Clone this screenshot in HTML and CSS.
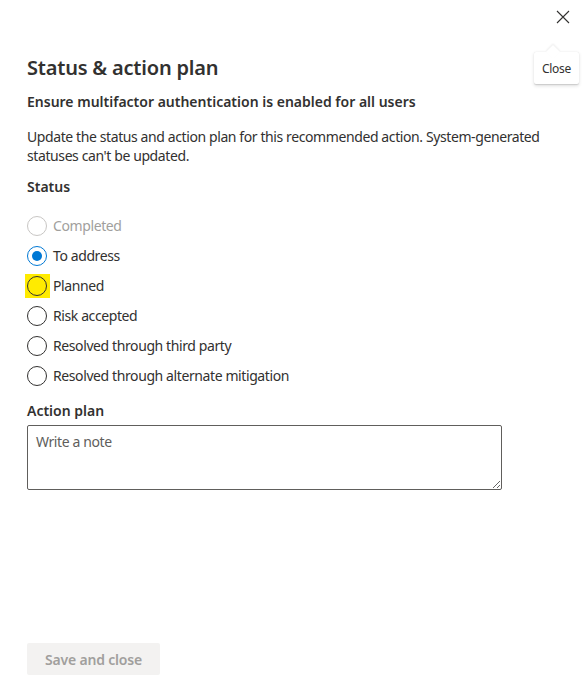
FILE: index.html
```html
<!DOCTYPE html>
<html>
<head>
<meta charset="utf-8">
<link rel="stylesheet" href="styles.css">
</head>
<body>
<div class="panel">
  <div class="topbar">
    <button class="close" aria-label="Close">
      <svg width="14" height="14" viewBox="0 0 14 14"><path d="M1 1L13 13M13 1L1 13" stroke="#323130" stroke-width="1.1" fill="none"/></svg>
    </button>
    <div class="tooltip">Close</div>
  </div>
  <h1 class="title">Status &amp; action plan</h1>
  <div class="subtitle">Ensure multifactor authentication is enabled for all users</div>
  <p class="desc">Update the status and action plan for this recommended action. System-generated statuses can't be updated.</p>
  <div class="label">Status</div>
  <div class="radios">
    <div class="radio disabled"><span class="circle"></span><span class="rtext">Completed</span></div>
    <div class="radio checked"><span class="circle"></span><span class="rtext">To address</span></div>
    <div class="radio highlight"><span class="hl"><span class="circle"></span></span><span class="rtext">Planned</span></div>
    <div class="radio"><span class="circle"></span><span class="rtext">Risk accepted</span></div>
    <div class="radio"><span class="circle"></span><span class="rtext">Resolved through third party</span></div>
    <div class="radio"><span class="circle"></span><span class="rtext">Resolved through alternate mitigation</span></div>
  </div>
  <div class="label label-plan">Action plan</div>
  <textarea class="note" placeholder="Write a note"></textarea>
  <div class="spacer"></div>
  <button class="save">Save and close</button>
</div>
</body>
</html>
```
FILE: styles.css
```css
html, body {
  margin: 0;
  padding: 0;
  background: #fff;
}
body {
  font-family: "Segoe UI", "Noto Sans", "Open Sans", sans-serif;
  color: #323130;
  font-size: 14px;
  width: 584px;
  height: 689px;
  overflow: hidden;
}
.panel {
  display: flex;
  flex-direction: column;
  height: 689px;
  padding: 0 0 0 27px;
  box-sizing: border-box;
}
.topbar {
  position: relative;
  height: 54px;
}
.close {
  position: absolute;
  right: 13px;
  top: 9px;
  width: 16px;
  height: 16px;
  padding: 0;
  border: none;
  background: none;
  display: flex;
  align-items: center;
  justify-content: center;
}
.tooltip {
  position: absolute;
  right: 5px;
  top: 52px;
  width: 45px;
  height: 32px;
  background: #fff;
  box-shadow: 0 1.6px 3.6px rgba(0,0,0,0.13), 0 0.3px 0.9px rgba(0,0,0,0.11);
  font-size: 12px;
  line-height: 33px;
  text-align: center;
  border-radius: 2px;
  letter-spacing: -0.3px;
  z-index: 2;
}
.tooltip::before {
  content: "";
  position: absolute;
  left: 14px;
  top: -5px;
  width: 10px;
  height: 10px;
  background: #fff;
  transform: rotate(45deg);
  box-shadow: -1px -1px 2px rgba(0,0,0,0.07);
}
.title {
  margin: 0;
  font-size: 20px;
  font-weight: 600;
  line-height: 28px;
  height: 28px;
  letter-spacing: -0.2px;
}
.subtitle {
  margin-top: 10px;
  font-weight: 600;
  line-height: 20px;
}
.desc {
  margin: 15px 0 0 0;
  line-height: 19px;
  width: 540px;
  letter-spacing: -0.4px;
}
.label {
  margin-top: 12px;
  font-weight: 600;
  line-height: 20px;
}
.radios {
  margin-top: 19px;
  display: flex;
  flex-direction: column;
  gap: 10px;
}
.radio {
  display: flex;
  align-items: center;
  height: 20px;
  gap: 6px;
}
.circle {
  width: 20px;
  height: 20px;
  border: 1px solid #323130;
  border-radius: 50%;
  box-sizing: border-box;
  position: relative;
  flex: none;
}
.radio.disabled .circle {
  border-color: #c8c6c4;
}
.radio.disabled .rtext {
  color: #a19f9d;
}
.radio.checked .circle {
  border-color: #0078d4;
}
.radio.checked .circle::after {
  content: "";
  position: absolute;
  left: 4px;
  top: 4px;
  width: 10px;
  height: 10px;
  border-radius: 50%;
  background: #0078d4;
}
.hl {
  display: flex;
  width: 20px;
  height: 20px;
  position: relative;
}
.hl::before {
  content: "";
  position: absolute;
  left: -2px;
  top: -2px;
  width: 25px;
  height: 24px;
  background: #ffeb00;
}
.hl .circle {
  background: #ffeb00;
}
.rtext {
  line-height: 20px;
  letter-spacing: -0.4px;
}
.label-plan {
  margin-top: 15px;
}
.note {
  margin-top: 4px;
  width: 475px;
  height: 65px;
  box-sizing: border-box;
  border: 1px solid #605e5c;
  border-radius: 2px;
  padding: 6px 8px;
  font-family: inherit;
  font-size: 14px;
  letter-spacing: -0.4px;
  color: #323130;
  resize: vertical;
}
.note::placeholder {
  color: #605e5c;
}
.spacer {
  flex: 1;
}
.save {
  width: 133px;
  height: 32px;
  margin-bottom: 14px;
  border: none;
  border-radius: 2px;
  background: #f3f2f1;
  color: #a19f9d;
  font-family: inherit;
  font-size: 14px;
  font-weight: 600;
  padding: 0;
  letter-spacing: -0.2px;
}
```
